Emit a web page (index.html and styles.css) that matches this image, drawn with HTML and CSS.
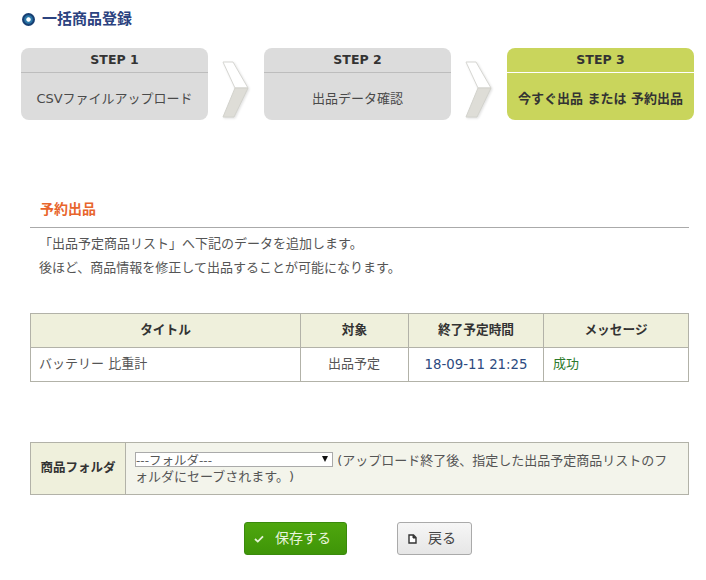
FILE: index.html
```html
<!DOCTYPE html>
<html lang="ja">
<head>
<meta charset="utf-8">
<title>一括商品登録</title>
<link rel="stylesheet" href="styles.css">
</head>
<body>
<h1 class="page-title"><span class="bullet"></span>一括商品登録</h1>
<div class="steps">
  <div class="step"><div class="step-head">STEP 1</div><div class="step-body">CSVファイルアップロード</div></div>
  <svg class="chev" width="30" height="58" viewBox="0 0 30 58" aria-hidden="true">
    <path d="M2 1 L12 1 L27 27 L14 27 Z" fill="#fff" stroke="#d6d6d2"/>
    <path d="M14 27 L27 27 L13 56 L2 56 Z" fill="#dedDd7" stroke="#d2d2cc"/>
  </svg>
  <div class="step"><div class="step-head">STEP 2</div><div class="step-body">出品データ確認</div></div>
  <svg class="chev" width="30" height="58" viewBox="0 0 30 58" aria-hidden="true">
    <path d="M2 1 L12 1 L27 27 L14 27 Z" fill="#fff" stroke="#d6d6d2"/>
    <path d="M14 27 L27 27 L13 56 L2 56 Z" fill="#dedDd7" stroke="#d2d2cc"/>
  </svg>
  <div class="step active"><div class="step-head">STEP 3</div><div class="step-body">今すぐ出品 または 予約出品</div></div>
</div>
<h2 class="section-title">予約出品</h2>
<div class="intro">
  <p>「出品予定商品リスト」へ下記のデータを追加します。</p>
  <p>後ほど、商品情報を修正して出品することが可能になります。</p>
</div>
<table class="result">
  <thead>
    <tr><th class="c1">タイトル</th><th class="c2">対象</th><th class="c3">終了予定時間</th><th class="c4">メッセージ</th></tr>
  </thead>
  <tbody>
    <tr><td>バッテリー 比重計</td><td class="center">出品予定</td><td class="center date">18-09-11 21:25</td><td class="ok">成功</td></tr>
  </tbody>
</table>
<table class="folder">
  <tr>
    <th>商品フォルダ</th>
    <td><span class="select-wrap"><select class="folder-select"><option>---フォルダ---</option></select><span class="select-arrow"></span></span> (アップロード終了後、指定した出品予定商品リストのフォルダにセーブされます。)</td>
  </tr>
</table>
<div class="actions">
  <button class="btn save" type="button">
    <svg width="10" height="8" viewBox="0 0 10 8" aria-hidden="true"><path d="M1 4 L3.8 6.6 L9 1.4" fill="none" stroke="#e6f2d8" stroke-width="1.8"/></svg>
    <span class="btn-label">保存する</span>
  </button>
  <button class="btn back" type="button">
    <svg width="9" height="10" viewBox="0 0 9 10" aria-hidden="true"><path d="M1 1 H5.5 L8 3.5 V9 H1 Z" fill="#fff" stroke="#333" stroke-width="1.4"/><path d="M5 1 V4 H8" fill="#333" stroke="#333"/></svg>
    <span class="btn-label">戻る</span>
  </button>
</div>
</body>
</html>
```
FILE: styles.css
```css
* { box-sizing: border-box; }
html, body { margin: 0; padding: 0; background: #fff; }
body {
  width: 706px;
  height: 580px;
  overflow: hidden;
  font-family: "DejaVu Sans", "Noto Sans CJK JP", sans-serif;
  font-size: 13px;
  color: #555;
  text-spacing-trim: space-all;
}
.page-title {
  display: flex;
  align-items: flex-start;
  gap: 7px;
  margin: 0;
  padding: 8px 0 0 22px;
  height: 48px;
  font-size: 15px;
  line-height: 22px;
  font-weight: 700;
  color: #2c4380;
}
.bullet {
  width: 13px;
  height: 13px;
  margin-top: 5px;
  border-radius: 50%;
  background: radial-gradient(circle, #fff 0 1.8px, #2a77a8 2.6px 3.6px, #173f73 5px 100%);
}
.steps {
  display: flex;
  align-items: flex-start;
  padding-left: 21px;
}
.chev {
  margin: 13px 13px 0 13px;
  flex: none;
  filter: drop-shadow(1px 1px 1px rgba(0, 0, 0, 0.12));
}
.step {
  width: 187px;
  height: 72px;
  flex: none;
  border-radius: 8px;
  background: #dcdcdc;
  text-align: center;
}
.step-head {
  height: 25px;
  line-height: 23px;
  border-bottom: 1px solid #bdbdbd;
  font-size: 12.5px;
  font-weight: 700;
  color: #333;
}
.step-body {
  line-height: 52px;
  font-size: 13px;
  color: #4a4a4a;
}
.step.active { background: #c9d55c; }
.step.active .step-head { border-bottom-color: #fff; }
.step.active .step-body { font-weight: 700; font-size: 13px; color: #333; }
.section-title {
  margin: 78px 17px 0 30px;
  padding: 1px 0 8px 10px;
  border-bottom: 1px solid #aaa;
  font-size: 14px;
  line-height: 20px;
  font-weight: 700;
  color: #e8652c;
}
.intro { margin: 4px 0 0 39px; line-height: 24px; }
.intro p { margin: 0; }
table { border-collapse: collapse; table-layout: fixed; margin-left: 30px; width: 659px; }
th, td { border: 1px solid #b2b2a8; }
.result { margin-top: 33px; }
.result th {
  height: 34px;
  background: #eff0dc;
  font-size: 12.7px;
  font-weight: 700;
  color: #333;
  padding: 0 0 4px;
}
.result td { height: 34px; padding: 0 9px 5px 8px; }
.result td.ok { padding-left: 9px; }
.c1 { width: 270px; }
.c2 { width: 108px; }
.c3 { width: 135px; }
.center { text-align: center; }
.result td.date { color: #2c4a80; font-size: 13.3px; padding: 0 0 1px; }
.ok { color: #2c7a2c; }
.folder { margin-top: 60px; }
.folder th {
  width: 95px;
  height: 52px;
  padding: 0 0 5px;
  background: #eff0dc;
  color: #333;
  font-size: 12.5px;
}
.folder td {
  background: #f3f4eb;
  padding: 0 9px;
  line-height: 16px;
}
.select-wrap {
  position: relative;
  display: inline-block;
  width: 198px;
  height: 15px;
  vertical-align: 0;
}
.folder-select {
  appearance: none;
  display: block;
  width: 198px;
  height: 15px;
  padding: 0;
  font: 12.5px/12px "Noto Sans CJK JP", sans-serif;
  color: #555;
  background: #fff;
  border: 1px solid #aaa;
  border-radius: 0;
}
.select-arrow {
  position: absolute;
  right: 5px;
  top: 4px;
  width: 0;
  height: 0;
  border-left: 3.5px solid transparent;
  border-right: 3.5px solid transparent;
  border-top: 6px solid #111;
}
.actions {
  display: flex;
  margin: 27px 0 0 244px;
  gap: 50px;
}
.btn {
  display: flex;
  align-items: center;
  gap: 11px;
  height: 33px;
  border-radius: 3px;
  font: 14px "Noto Sans CJK JP", sans-serif;
  padding: 0 0 0 9px;
}
.btn-label { margin-top: -3px; }
.save {
  width: 103px;
  color: #e8f4dc;
  border: 1px solid #3a8a0c;
  background: linear-gradient(#4ea60e, #3f9508);
}
.back {
  width: 75px;
  padding-left: 10px;
  color: #444;
  border: 1px solid #aaa;
  background: linear-gradient(#f6f6f6, #e6e6e6);
}
```
